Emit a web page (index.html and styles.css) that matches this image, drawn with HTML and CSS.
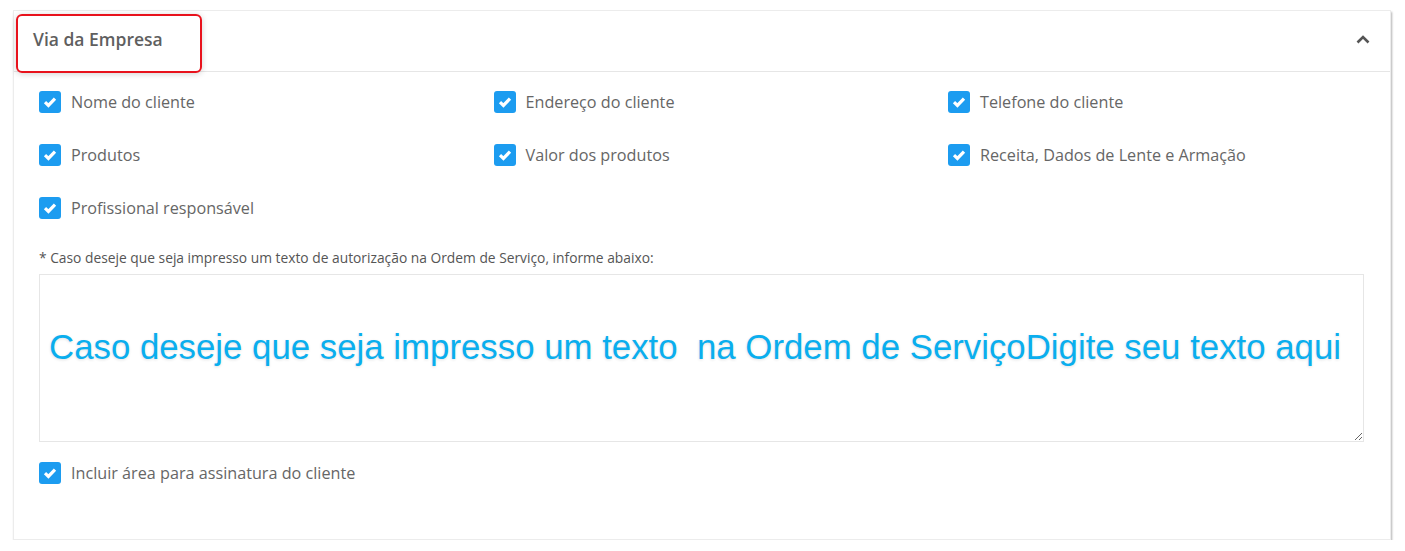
FILE: index.html
```html
<!DOCTYPE html>
<html>
<head>
  <meta charset="UTF-8">
  <meta name="viewport" content="width=device-width, initial-scale=1.0">
  <title>Via da Empresa</title>
  <link rel="stylesheet" href="styles.css">
</head>
<body>
  <div class="panel">
    <div class="panel-header">
      <h3 class="panel-title">Via da Empresa</h3>
      <span class="title-mark"></span>
      <svg class="chevron" width="14" height="9" viewBox="0 0 14 9"><path d="M1.5 7.5 L7 2 L12.5 7.5" fill="none" stroke="#555" stroke-width="2.6"/></svg>
    </div>
    <div class="panel-body">
      <div class="options">
        <label class="check"><span class="box"><svg width="14" height="12" viewBox="0 0 14 12"><path d="M2 6.2 L5.4 9.4 L12 2.6" fill="none" stroke="#fff" stroke-width="3.2"/></svg></span>Nome do cliente</label>
        <label class="check"><span class="box"><svg width="14" height="12" viewBox="0 0 14 12"><path d="M2 6.2 L5.4 9.4 L12 2.6" fill="none" stroke="#fff" stroke-width="3.2"/></svg></span>Endereço do cliente</label>
        <label class="check"><span class="box"><svg width="14" height="12" viewBox="0 0 14 12"><path d="M2 6.2 L5.4 9.4 L12 2.6" fill="none" stroke="#fff" stroke-width="3.2"/></svg></span>Telefone do cliente</label>
        <label class="check"><span class="box"><svg width="14" height="12" viewBox="0 0 14 12"><path d="M2 6.2 L5.4 9.4 L12 2.6" fill="none" stroke="#fff" stroke-width="3.2"/></svg></span>Produtos</label>
        <label class="check"><span class="box"><svg width="14" height="12" viewBox="0 0 14 12"><path d="M2 6.2 L5.4 9.4 L12 2.6" fill="none" stroke="#fff" stroke-width="3.2"/></svg></span>Valor dos produtos</label>
        <label class="check"><span class="box"><svg width="14" height="12" viewBox="0 0 14 12"><path d="M2 6.2 L5.4 9.4 L12 2.6" fill="none" stroke="#fff" stroke-width="3.2"/></svg></span>Receita, Dados de Lente e Armação</label>
        <label class="check"><span class="box"><svg width="14" height="12" viewBox="0 0 14 12"><path d="M2 6.2 L5.4 9.4 L12 2.6" fill="none" stroke="#fff" stroke-width="3.2"/></svg></span>Profissional responsável</label>
      </div>
      <p class="note">* Caso deseje que seja impresso um texto de autorização na Ordem de Serviço, informe abaixo:</p>
      <textarea class="auth-text" placeholder="Caso deseje que seja impresso um texto  na Ordem de ServiçoDigite seu texto aqui"></textarea>
      <label class="check signature"><span class="box"><svg width="14" height="12" viewBox="0 0 14 12"><path d="M2 6.2 L5.4 9.4 L12 2.6" fill="none" stroke="#fff" stroke-width="3.2"/></svg></span>Incluir área para assinatura do cliente</label>
    </div>
  </div>
</body>
</html>
```

FILE: styles.css
```css
:root {
  --blue: #1c9cf0; --text-main: #666666; --border-color: #e6e6e6;
}
html { box-sizing: border-box; }
*, *:before, *:after { box-sizing: inherit; }
body {
  margin: 0; padding: 10px 14px 0 13px; background: #ffffff;
  font-family: 'Open Sans', 'Noto Sans', Arial, sans-serif; color: var(--text-main);
}
.panel {
  background: #fff; border: 1px solid #ececec;
  box-shadow: 1px 2px 2px rgba(0, 0, 0, 0.3); height: 530px;
}
.panel-header {
  position: relative; height: 61px; border-bottom: 1px solid var(--border-color);
  display: flex; align-items: center; justify-content: space-between; padding: 0 20px 0 19px;
}
.panel-title { margin: 0 0 4px 0; font-size: 17.5px; font-weight: 600; color: #5f5f5f; }
.title-mark {
  position: absolute; left: 2px; top: 3px; width: 186px; height: 59px;
  border: 2px solid #e8121c; border-radius: 6px;
  box-shadow: 0 1px 6px rgba(0, 0, 0, 0.18);
}
.chevron { margin-bottom: 4px; }
.panel-body { padding: 19px 26px 0 25px; }
.options {
  display: grid; grid-template-columns: repeat(3, 416px); column-gap: 38.5px; row-gap: 31px;
}
.check {
  display: flex; align-items: center; gap: 10px; height: 22px;
  font-size: 16.2px; color: var(--text-main); cursor: pointer;
}
.box {
  width: 22px; height: 22px; border-radius: 3px; background: var(--blue);
  display: inline-flex; align-items: center; justify-content: center; flex-shrink: 0;
}
.note { margin: 30px 0 7px 0; font-size: 13.8px; line-height: 18px; color: #555; }
.auth-text {
  display: block; width: 100%; height: 168px; padding: 0 9px; margin: 0;
  border: 1px solid var(--border-color); resize: vertical; outline: none;
  font-family: 'Liberation Sans', Arial, sans-serif; font-size: 34.8px; line-height: 144px;
  color: #0aaeee; background: #fff; overflow: hidden; white-space: pre;
}
.auth-text::placeholder { color: #0aaeee; opacity: 1; white-space: pre; text-shadow: 0 1px 3px rgba(0, 0, 0, 0.12); }
.signature { margin-top: 20px; }
```
